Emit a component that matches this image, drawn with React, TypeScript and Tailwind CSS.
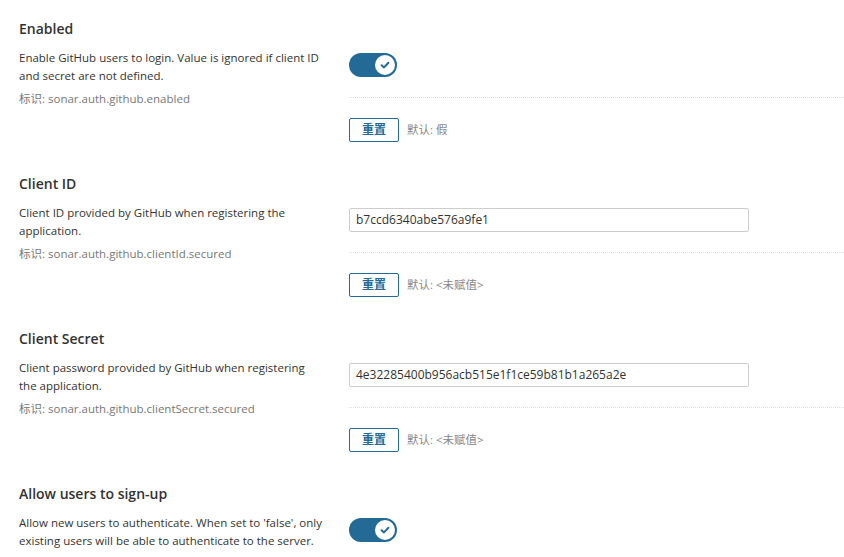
import React from "react";

const font = { fontFamily: '"Open Sans", "Noto Sans CJK SC", sans-serif' };

type Setting = {
  title: string;
  desc: string;
  keyName: string;
  kind: "toggle" | "input";
  value?: string;
  defaultText: string;
};

const settings: Setting[] = [
  {
    title: "Enabled",
    desc: "Enable GitHub users to login. Value is ignored if client ID and secret are not defined.",
    keyName: "sonar.auth.github.enabled",
    kind: "toggle",
    defaultText: "默认: 假",
  },
  {
    title: "Client ID",
    desc: "Client ID provided by GitHub when registering the application.",
    keyName: "sonar.auth.github.clientId.secured",
    kind: "input",
    value: "b7ccd6340abe576a9fe1",
    defaultText: "默认: <未赋值>",
  },
  {
    title: "Client Secret",
    desc: "Client password provided by GitHub when registering the application.",
    keyName: "sonar.auth.github.clientSecret.secured",
    kind: "input",
    value: "4e32285400b956acb515e1f1ce59b81b1a265a2e",
    defaultText: "默认: <未赋值>",
  },
  {
    title: "Allow users to sign-up",
    desc: "Allow new users to authenticate. When set to 'false', only existing users will be able to authenticate to the server.",
    keyName: "sonar.auth.github.allowUsersToSignUp",
    kind: "toggle",
    defaultText: "默认: 真",
  },
];

const Toggle = () => (
  <div className="flex h-6 w-12 items-center justify-end rounded-full bg-[#236a97] pr-[2px]">
    <div className="flex h-5 w-5 items-center justify-center rounded-full bg-white">
      <svg width="10" height="10" viewBox="0 0 10 10">
        <path
          d="M1.6 5.2 L4 7.4 L8.4 2.8"
          fill="none"
          stroke="#236a97"
          strokeWidth="2"
          strokeLinecap="round"
          strokeLinejoin="round"
        />
      </svg>
    </div>
  </div>
);

const SettingRow = ({ s }: { s: Setting }) => (
  <div className="mb-[33px]">
    <h3 className="pl-[19px] text-[14px] font-semibold leading-[18px] text-[#333]">{s.title}</h3>
    <div className="mt-[11px] flex">
      {/* left: description */}
      <div className="w-[349px] shrink-0 pl-[19px] pr-[25px] text-[11.5px] leading-[18px] text-[#333]">
        <div>{s.desc}</div>
        <div className="mt-[5px] text-[#777]">标识: {s.keyName}</div>
      </div>
      {/* right: control */}
      <div className="flex-1 pt-1">
        <div className="border-b border-dotted border-[#ddd] pb-5">
          {s.kind === "toggle" ? (
            <Toggle />
          ) : (
            <div className="flex h-6 w-[400px] items-center rounded-[2px] border border-[#cdcdcd] bg-white px-[6px] text-[12px] text-[#333]">
              {s.value}
            </div>
          )}
        </div>
        <div className="flex items-center gap-2 pt-5">
          <button className="h-6 w-[50px] rounded-[2px] border border-[#236a97] bg-white text-[12px] font-semibold text-[#236a97]">
            重置
          </button>
          <span className="text-[11.5px] text-[#888]">{s.defaultText}</span>
        </div>
      </div>
    </div>
  </div>
);

export default function App() {
  return (
    <div className="h-[557px] w-full overflow-hidden bg-white pt-5" style={font}>
      {settings.map((s) => (
        <SettingRow key={s.title} s={s} />
      ))}
    </div>
  );
}
